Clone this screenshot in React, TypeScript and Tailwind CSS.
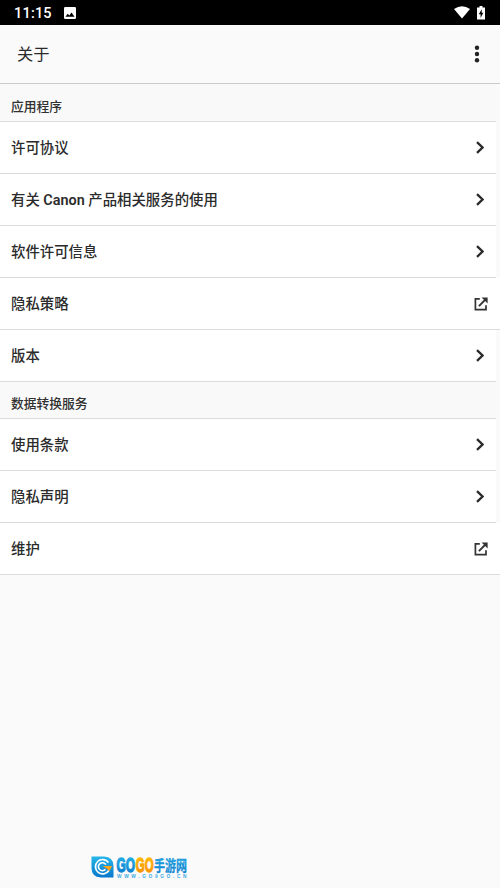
import type { ReactNode } from "react";

function Chevron() {
  return (
    <svg className="h-[14px] w-[9px]" viewBox="0 0 9 14" fill="none">
      <path d="M2 1.1 7.5 6.5 2 11.9" stroke="#2b2b2b" strokeWidth="2.3" />
    </svg>
  );
}

function External() {
  return (
    <svg className="h-[14px] w-[14px]" viewBox="0 0 14 14" fill="none">
      <path d="M5.8 1.9H1.4V12.6H12V8.2" stroke="#333" strokeWidth="1.7" />
      <path d="M4.9 9.1 11.6 2.4" stroke="#333" strokeWidth="2" />
      <path d="M7.6 0.4H13.6V6.4Z" fill="#333" />
    </svg>
  );
}

function Section({ children, first }: { children: ReactNode; first?: boolean }) {
  return (
    <div
      className={`flex w-[496px] items-center border-b border-[#dcdcdc] bg-[#f9f9f9] pl-[11px] text-[12.75px] font-medium text-[#303030] ${first ? "h-[38px] pt-[8px]" : "h-[37px] pt-[8px]"}`}
    >
      {children}
    </div>
  );
}

function Item({ children, external }: { children: ReactNode; external?: boolean }) {
  return (
    <div
      className={`flex h-[52px] items-center justify-between border-b border-[#dcdcdc] bg-white pl-[11px] pr-[12px] text-[14.4px] font-medium text-[#2b2b2b] ${external ? "w-[500px]" : "w-[496px]"}`}
    >
      <span className="pt-[2px]">{children}</span>
      {external ? <External /> : <Chevron />}
    </div>
  );
}

function Logo() {
  return (
    <svg className="h-[26px] w-[100px] overflow-visible" viewBox="0 0 100 26">
      <defs>
        <linearGradient id="blue" x1="0" y1="0" x2="0" y2="1">
          <stop offset="0" stopColor="#27b6e8" />
          <stop offset="1" stopColor="#0878cc" />
        </linearGradient>
        <linearGradient id="orange" x1="0" y1="0" x2="0" y2="1">
          <stop offset="0" stopColor="#ffc107" />
          <stop offset="1" stopColor="#f98a05" />
        </linearGradient>
      </defs>
      <path d="M1.5 1.5H14Q23.5 2 23.5 11V22.5H11Q1.5 22 1.5 13Z" fill="url(#blue)" />
      <path d="M18.5 7.5A7.2 7.2 0 1 0 18.8 15.5" fill="none" stroke="#fff" strokeWidth="1.7" />
      <path d="M15.8 9.6A4 4 0 1 0 15.5 14.3" fill="none" stroke="#fff" strokeWidth="1.6" />
      <path d="M12.5 11H22L19.5 16.3 17 13.8Z" fill="#ffa31a" />
      <g fontFamily="'Liberation Sans', sans-serif" fontWeight="700" fontSize="19.5">
        <text x="26.5" y="16.8" textLength="18.5" lengthAdjust="spacingAndGlyphs" fill="url(#blue)" stroke="url(#blue)" strokeWidth="1.3">GO</text>
        <text x="45.8" y="16.8" textLength="17.8" lengthAdjust="spacingAndGlyphs" fill="url(#orange)" stroke="url(#orange)" strokeWidth="1.3">GO</text>
      </g>
      <text x="64" y="16" textLength="33" lengthAdjust="spacingAndGlyphs" fontFamily="'Noto Sans CJK SC', sans-serif" fontWeight="700" fontSize="14.5" fill="url(#blue)" stroke="#138fd6" strokeWidth="0.3">手游网</text>
      <text x="27" y="23" textLength="69.5" fontFamily="'Liberation Sans', sans-serif" fontWeight="700" fontSize="4.8" fill="#3ba9df">WWW.GO9GO.CN</text>
    </svg>
  );
}

export default function App() {
  return (
    <div className="flex h-[888px] w-[500px] flex-col bg-[#fafafa] font-['Roboto','Noto_Sans_CJK_SC',sans-serif]">
      <header className="flex h-[25px] shrink-0 items-center bg-black text-white">
        <span className="ml-[14px] w-[38px] pt-[3px] text-[14.5px] font-medium leading-none tracking-[0.2px]">11:15</span>
        <svg className="ml-[12px] h-[12px] w-[12px]" viewBox="0 0 12 12">
          <rect width="12" height="12" rx="1.3" fill="#fff" />
          <path d="M1.5 9.8 3.7 6.8 5.3 8.6 7.5 5.5 10.5 9.8Z" fill="#000" />
        </svg>
        <svg className="ml-auto h-[13px] w-[16px]" viewBox="0 0 16 13">
          <path d="M0 3Q8-2.5 16 3L8 12.6Z" fill="#fff" />
        </svg>
        <svg className="ml-[7px] mr-[15px] h-[14px] w-[8px]" viewBox="0 0 8 14">
          <path d="M2.5 0H5.5V1.4H8V13.5H0V1.4H2.5Z" fill="#fff" />
          <path d="M4.7 3.2 1.8 8.3H3.6V12L6.3 6.8H4.7Z" fill="#000" />
        </svg>
      </header>
      <div className="flex h-[59px] shrink-0 items-center border-b border-[#c9c9c9] pl-[17px] text-[16.3px] text-[#2b2b2b]">
        <h1 className="pt-[2px]">关于</h1>
        <svg className="ml-auto mr-[20px] h-[18px] w-[6px]" viewBox="0 0 6 18" fill="#222">
          <circle cx="3" cy="2.7" r="2.2" />
          <circle cx="3" cy="9" r="2.2" />
          <circle cx="3" cy="15.3" r="2.2" />
        </svg>
      </div>
      <main>
        <Section first>应用程序</Section>
        <Item>许可协议</Item>
        <Item>有关 <b className="font-semibold">Canon</b> 产品相关服务的使用</Item>
        <Item>软件许可信息</Item>
        <Item external>隐私策略</Item>
        <Item>版本</Item>
        <Section>数据转换服务</Section>
        <Item>使用条款</Item>
        <Item>隐私声明</Item>
        <Item external>维护</Item>
      </main>
      <footer className="mb-[7px] ml-[90px] mt-auto h-[26px]">
        <Logo />
      </footer>
    </div>
  );
}
